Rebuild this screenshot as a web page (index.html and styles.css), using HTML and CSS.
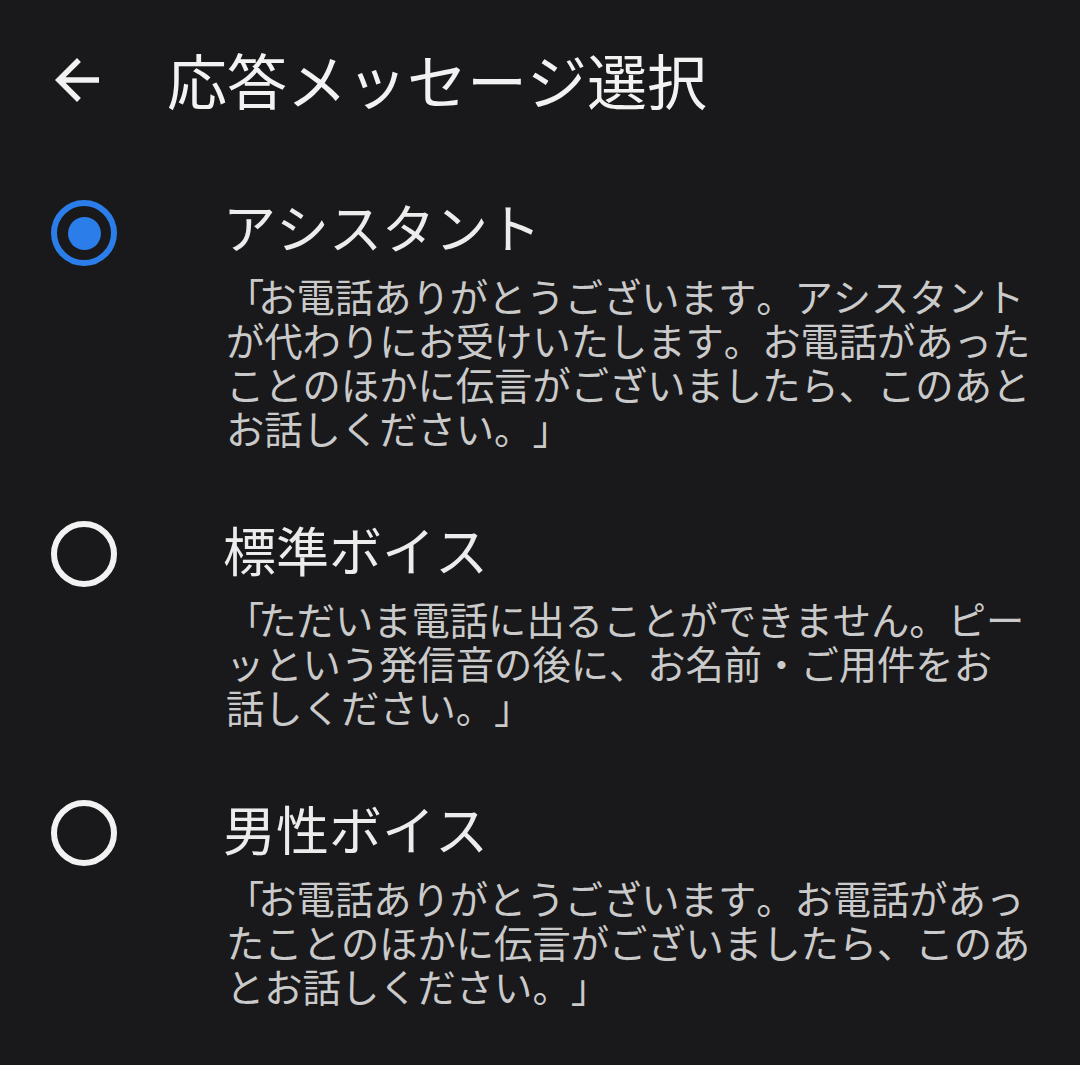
FILE: index.html
```html
<!DOCTYPE html>
<html lang="ja">
<head>
<meta charset="utf-8">
<title>応答メッセージ選択</title>
<link rel="stylesheet" href="styles.css">
</head>
<body>
<header class="appbar">
  <div class="back">
    <svg viewBox="0 0 24 24" width="66" height="66"><path d="M20 11H7.83l5.59-5.59L12 4l-8 8 8 8 1.41-1.41L7.83 13H20v-2z" fill="#f2f2f2"/></svg>
  </div>
  <h1 class="title">応答メッセージ選択</h1>
</header>
<main class="list">
  <div class="item">
    <div class="radio-col"><span class="radio checked"></span></div>
    <div class="text">
      <div class="label">アシスタント</div>
      <div class="desc"><span class="ob">「</span>お電話ありがとうございます。アシスタント<br>が代わりにお受けいたします。お電話があった<br>ことのほかに伝言がございましたら、このあと<br>お話しください。」</div>
    </div>
  </div>
  <div class="item">
    <div class="radio-col"><span class="radio"></span></div>
    <div class="text">
      <div class="label">標準ボイス</div>
      <div class="desc"><span class="ob">「</span>ただいま電話に出ることができません。ピー<br>ッという発信音の後に、お名前・ご用件をお<br>話しください。」</div>
    </div>
  </div>
  <div class="item">
    <div class="radio-col"><span class="radio"></span></div>
    <div class="text">
      <div class="label">男性ボイス</div>
      <div class="desc"><span class="ob">「</span>お電話ありがとうございます。お電話があっ<br>たことのほかに伝言がございましたら、このあ<br>とお話しください。」</div>
    </div>
  </div>
</main>
</body>
</html>
```
FILE: styles.css
```css
html, body {
  margin: 0;
  padding: 0;
  background: #19191b;
}
body {
  width: 1080px;
  height: 1065px;
  overflow: hidden;
  font-family: "Noto Sans CJK JP", "Noto Sans", sans-serif;
  text-spacing-trim: space-all;
  font-kerning: none;
}
.appbar {
  display: flex;
  align-items: center;
  height: 164px;
}
.back {
  width: 66px;
  height: 66px;
  margin-left: 44px;
  margin-top: -4px;
  display: flex;
}
.title {
  margin: -6px 0 0 57px;
  font-size: 60px;
  font-weight: 400;
  color: #f2f2f2;
  line-height: 80px;
  white-space: nowrap;
}
.item {
  display: flex;
  padding: 34px 0 35px 0;
}
.item:first-child {
  padding-top: 32px;
}
.radio-col {
  width: 226px;
  flex: none;
}
.radio {
  display: block;
  box-sizing: border-box;
  width: 66px;
  height: 66px;
  margin: 2px 0 0 51px;
  border: 6px solid #f2f2f2;
  border-radius: 50%;
  position: relative;
}
.item:first-child .radio {
  margin-top: 4px;
}
.radio.checked {
  border-color: #2b7de9;
}
.radio.checked::after {
  content: "";
  position: absolute;
  left: 50%;
  top: 50%;
  width: 33px;
  height: 33px;
  margin: -16.5px 0 0 -16.5px;
  border-radius: 50%;
  background: #2b7de9;
}
.text {
  flex: 1;
}
.label {
  margin-left: -3px;
  font-size: 53px;
  line-height: 60px;
  color: #ececec;
  white-space: nowrap;
}
.desc {
  margin-top: 18px;
  font-size: 38.3px;
  line-height: 44px;
  color: #cacaca;
  white-space: nowrap;
}
.ob {
  letter-spacing: -6px;
}
```
